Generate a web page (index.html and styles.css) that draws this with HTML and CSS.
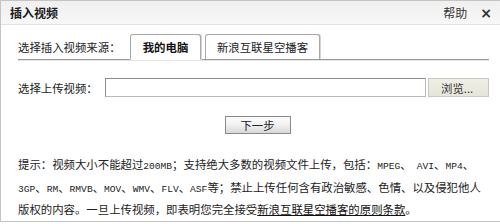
FILE: index.html
```html
<!DOCTYPE html>
<html lang="zh-CN">
<head>
<meta charset="utf-8">
<title>插入视频</title>
<link rel="stylesheet" href="styles.css">
</head>
<body>
<div class="dialog">
  <div class="header">
    <span class="title">插入视频</span>
    <div class="header-actions">
      <a class="help">帮助</a>
      <span class="close">×</span>
    </div>
  </div>
  <div class="body">
    <div class="tabbar">
      <span class="tab-label">选择插入视频来源：</span>
      <div class="tab active">我的电脑</div>
      <div class="tab">新浪互联星空播客</div>
    </div>
    <div class="upload-row">
      <span class="row-label">选择上传视频：</span>
      <div class="file-input"></div>
      <div class="browse">浏览...</div>
    </div>
    <div class="actions">
      <div class="next-btn">下一步</div>
    </div>
    <p class="hint">提示：视频大小不能超过<span class="en">200MB</span>；支持绝大多数的视频文件上传，包括：<span class="en">MPEG</span>、&nbsp;&nbsp;<span class="en">AVI</span>、<span class="en">MP4</span>、<br><span class="en">3GP</span>、<span class="en">RM</span>、<span class="en">RMVB</span>、<span class="en">MOV</span>、<span class="en">WMV</span>、<span class="en">FLV</span>、<span class="en">ASF</span>等；禁止上传任何含有政治敏感、色情、以及侵犯他人<br>版权的内容。一旦上传视频，即表明您完全接受<a class="terms">新浪互联星空播客的原则条款</a>。</p>
  </div>
</div>
</body>
</html>
```
FILE: styles.css
```css
* { box-sizing: border-box; }
html, body { margin: 0; padding: 0; background: #fff; }
body {
  font-family: "Noto Sans CJK SC", "Liberation Sans", sans-serif;
  font-size: 11.4px;
  color: #222;
}
.dialog {
  width: 500px;
  height: 222px;
  border: 1px solid #c4c4c4;
  border-right: 0;
  display: flex;
  flex-direction: column;
}
.header {
  height: 24px;
  background: linear-gradient(#f0f0f0, #f7f7f7);
  border-bottom: 1px solid #e2e2e2;
  display: flex;
  align-items: center;
  justify-content: space-between;
  padding: 0 8px 0 9px;
}
.title { font-size: 12px; font-weight: bold; color: #1a1a1a; line-height: 16px; }
.header-actions { display: flex; align-items: center; gap: 13px; }
.help { color: #333; line-height: 16px; font-size: 12px; }
.close { font-family: "DejaVu Sans", sans-serif; font-size: 14px; font-weight: bold; color: #333; line-height: 16px; }
.body {
  padding: 9px 11px 0 17px;
  display: flex;
  flex-direction: column;
}
.tabbar {
  display: flex;
  align-items: flex-end;
  border-bottom: 1px solid #9a9a9a;
  box-shadow: 0 1px 0 #e6e6e6;
  height: 26px;
}
.tab-label { align-self: center; line-height: 16px; margin-top: 1px; width: 112px; }
.tab {
  height: 26px;
  margin-bottom: -1px;
  border: 1px solid #a8a8a8;
  border-bottom-color: #9a9a9a;
  border-radius: 3px 3px 0 0;
  box-shadow: 1px 0 0 #d4d4d4;
  background: #fff;
  display: flex;
  align-items: center;
  justify-content: center;
  line-height: 16px;
}
.tab.active {
  width: 71px;
  font-weight: bold;
  color: #111;
  border-bottom-color: #fff;
  margin-right: 4px;
}
.tab:not(.active) { width: 115px; height: 25px; margin-bottom: 0; border-bottom: 0; }
.upload-row {
  display: flex;
  align-items: center;
  margin-top: 18px;
  height: 19px;
}
.row-label { width: 87px; line-height: 16px; }
.file-input {
  width: 321px;
  height: 19px;
  border: 1px solid #8c8c8c;
  border-right-color: #b8b8b8;
  border-bottom-color: #b8b8b8;
  background: #fff;
}
.browse {
  margin-left: 2px;
  width: 61px;
  height: 19px;
  border: 1px solid #c8c8c0;
  background: linear-gradient(#f0efe6, #e6e5d9);
  color: #333;
  display: flex;
  align-items: center;
  padding-left: 12px;
  line-height: 16px;
}
.actions {
  display: flex;
  justify-content: center;
  margin-top: 19px;
  padding-right: 12px;
}
.next-btn {
  margin-left: 20px;
  width: 66px;
  height: 18px;
  border: 1px solid #8a8a8a;
  background: linear-gradient(#fdfdfd 0%, #f0f0f0 50%, #d8d8d8 100%);
  display: flex;
  align-items: center;
  justify-content: center;
  line-height: 16px;
  color: #222;
}
.hint {
  margin: 19px 0 0 0;
  line-height: 22.5px;
  white-space: nowrap;
}
.en { font-family: "Liberation Mono", monospace; font-size: 9.6px; line-height: 1; }
.terms { color: #111; text-decoration: underline; }
```
